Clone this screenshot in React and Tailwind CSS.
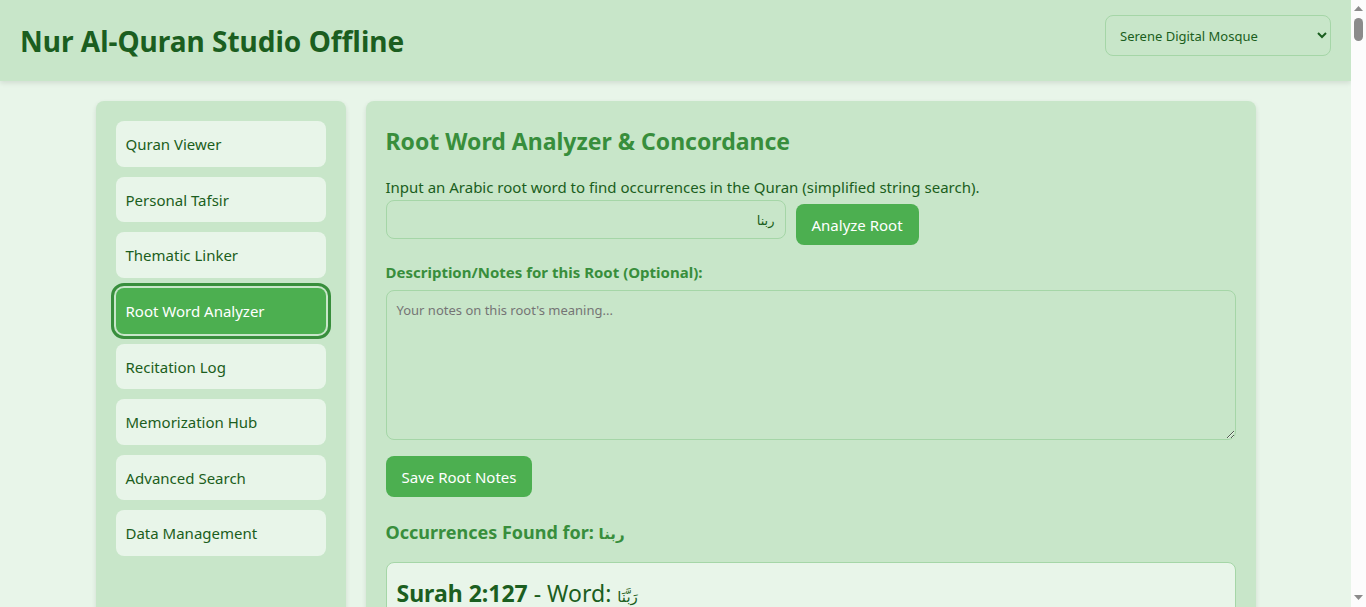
import { useState } from "react";

const sections = [
  "Quran Viewer",
  "Personal Tafsir",
  "Thematic Linker",
  "Root Word Analyzer",
  "Recitation Log",
  "Memorization Hub",
  "Advanced Search",
  "Data Management",
];

const themes = ["Serene Digital Mosque", "Ancient Illuminated Manuscript", "Futuristic Neon"];

function Header() {
  return (
    <header className="relative flex shrink-0 items-center justify-between bg-[#c8e6c9] py-[15px] px-5 shadow-[0_2px_5px_rgba(0,0,0,0.1)]">
      <h1 className="text-[28px] leading-[46px] font-bold">Nur Al-Quran Studio Offline</h1>
      <select
        aria-label="Theme"
        className="mb-[10px] h-[41px] w-[226px] rounded-lg border border-[#a5d6a7] bg-[#c8e6c9] px-[10px] text-[13px] text-[#1b5e20]"
      >
        {themes.map((theme) => (
          <option key={theme}>{theme}</option>
        ))}
      </select>
    </header>
  );
}

function Sidebar({ active, onSelect }) {
  return (
    <nav className="w-[250px] shrink-0 rounded-lg bg-[#c8e6c9] p-5 shadow-[0_2px_5px_rgba(0,0,0,0.1)]">
      <ul className="grid h-[435px] auto-rows-fr gap-[10px]">
        {sections.map((name) => (
          <li key={name} className="flex">
            <button
              type="button"
              onClick={() => onSelect(name)}
              className={
                name === active
                  ? "flex-1 rounded-lg bg-[#4caf50] px-[10px] pt-px text-left text-white outline-3 outline-offset-2 outline-[#388e3c]"
                  : "flex-1 rounded-lg bg-[#e8f5e9] px-[10px] pt-px text-left"
              }
            >
              {name}
            </button>
          </li>
        ))}
      </ul>
    </nav>
  );
}

function ActionButton({ children }) {
  return (
    <button type="button" className="h-[41px] shrink-0 rounded-lg bg-[#4caf50] px-4 pt-[2px] text-white">
      {children}
    </button>
  );
}

function RootAnalyzer() {
  const [root, setRoot] = useState("ربنا");
  return (
    <main className="min-w-0 flex-1 rounded-lg bg-[#c8e6c9] p-5 shadow-[0_2px_5px_rgba(0,0,0,0.1)]">
      <h2 className="mb-4 text-[23px] leading-10 font-bold text-[#388e3c]">Root Word Analyzer &amp; Concordance</h2>
      <label htmlFor="root" className="block h-[23px] leading-5">
        Input an Arabic root word to find occurrences in the Quran (simplified string search).
      </label>
      <div className="flex items-start gap-[10px]">
        <input
          id="root"
          dir="rtl"
          value={root}
          onChange={(e) => setRoot(e.target.value)}
          className="h-[39px] w-[400px] rounded-lg border border-[#a5d6a7] px-[10px] text-[13px]"
        />
        <div className="flex pt-1">
          <ActionButton>Analyze Root</ActionButton>
        </div>
      </div>
      <label htmlFor="notes" className="mt-[15px] mb-[5px] block leading-[25px] font-bold text-[#388e3c]">
        Description/Notes for this Root (Optional):
      </label>
      <textarea
        id="notes"
        placeholder="Your notes on this root's meaning..."
        className="block h-[150px] w-full resize-y rounded-lg border border-[#a5d6a7] p-[10px] text-[13px] leading-[18px] placeholder:text-[#757575]"
      />
      <div className="mt-4 flex">
        <ActionButton>Save Root Notes</ActionButton>
      </div>
      <h3 className="mt-5 mb-[15px] text-[18px] leading-[30px] font-bold text-[#388e3c]">
        Occurrences Found for: <bdi className="text-[15px] leading-none">{root}</bdi>
      </h3>
      <article className="rounded-lg border border-[#a5d6a7] bg-[#e8f5e9] px-[10px] py-4">
        <p className="text-[23px] leading-7">
          <strong>Surah 2:127</strong> - Word: <bdi className="text-[15px] leading-none">رَبَّنَا</bdi>
        </p>
      </article>
    </main>
  );
}

function Scrollbar() {
  return (
    <div aria-hidden="true" className="flex w-[15px] shrink-0 flex-col items-center bg-[#fcfcfc]">
      <svg className="mt-[6px] h-[5px] w-[9px]" viewBox="0 0 9 5">
        <path d="M4.5 0 9 5H0Z" fill="#8b8b8b" />
      </svg>
      <div className="mt-[7px] h-[23px] w-[9px] rounded-full bg-[#8b8b8b]" />
      <svg className="mt-auto mb-[7px] h-[5px] w-[9px]" viewBox="0 0 9 5">
        <path d="M0 0H9L4.5 5Z" fill="#8b8b8b" />
      </svg>
    </div>
  );
}

export default function App() {
  const [active, setActive] = useState("Root Word Analyzer");
  return (
    <div className="flex h-screen overflow-hidden bg-[#e8f5e9] font-['Noto_Sans','DejaVu_Sans',sans-serif] text-[15px] text-[#1b5e20]">
      <div className="flex min-w-0 flex-1 flex-col overflow-hidden">
        <Header />
        <div className="mx-auto flex w-full max-w-[1200px] flex-1 gap-5 p-5">
          <Sidebar active={active} onSelect={setActive} />
          <RootAnalyzer />
        </div>
      </div>
      <Scrollbar />
    </div>
  );
}
